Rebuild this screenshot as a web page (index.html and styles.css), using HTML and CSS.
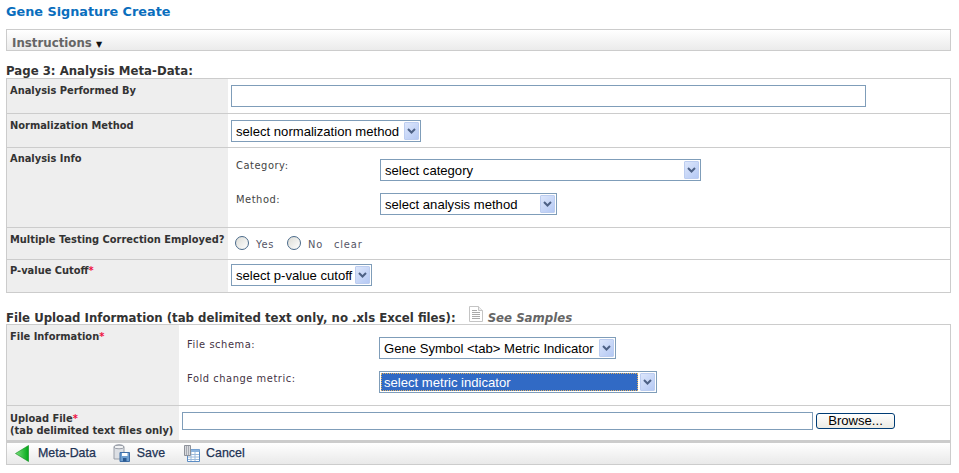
FILE: index.html
```html
<!DOCTYPE html>
<html>
  <head>
    <title>Gene Signature Create</title>
    <link rel="stylesheet" href="styles.css">
  </head>
  <body>
    <h1 class="page-title">Gene Signature Create</h1>
    <div class="instructions">Instructions <span class="caret">&#9660;</span></div>

    <h2 class="section-title first">Page 3: Analysis Meta-Data:</h2>
    <div class="form-box">
      <div class="row row-by">
        <div class="label wide">Analysis Performed By</div>
        <div class="value"><input class="text-input by-input" type="text"></div>
      </div>
      <div class="row row-norm">
        <div class="label wide">Normalization Method</div>
        <div class="value">
          <div class="select w-norm"><span class="select-text">select normalization method</span><span class="arrow"><svg width="9" height="6" viewBox="0 0 9 6"><path d="M1 1l3.5 3.5L8 1" fill="none" stroke="#4d6185" stroke-width="2"/></svg></span></div>
        </div>
      </div>
      <div class="row row-info">
        <div class="label wide">Analysis Info</div>
        <div class="value stack">
          <div class="field">
            <span class="field-name name-info">Category:</span>
            <div class="select w-cat"><span class="select-text">select category</span><span class="arrow"><svg width="9" height="6" viewBox="0 0 9 6"><path d="M1 1l3.5 3.5L8 1" fill="none" stroke="#4d6185" stroke-width="2"/></svg></span></div>
          </div>
          <div class="field">
            <span class="field-name name-info">Method:</span>
            <div class="select w-method"><span class="select-text">select analysis method</span><span class="arrow"><svg width="9" height="6" viewBox="0 0 9 6"><path d="M1 1l3.5 3.5L8 1" fill="none" stroke="#4d6185" stroke-width="2"/></svg></span></div>
          </div>
        </div>
      </div>
      <div class="row row-multi">
        <div class="label wide">Multiple Testing Correction Employed?</div>
        <div class="value radios">
          <input class="radio" type="radio" name="mtc"><span class="radio-text">Yes</span>
          <input class="radio radio-no" type="radio" name="mtc"><span class="radio-text">No</span>
          <span class="clear">clear</span>
        </div>
      </div>
      <div class="row row-cut">
        <div class="label wide">P-value Cutoff<span class="req">*</span></div>
        <div class="value">
          <div class="select w-cut"><span class="select-text">select p-value cutoff</span><span class="arrow"><svg width="9" height="6" viewBox="0 0 9 6"><path d="M1 1l3.5 3.5L8 1" fill="none" stroke="#4d6185" stroke-width="2"/></svg></span></div>
        </div>
      </div>
    </div>

    <h2 class="section-title second">
      <span>File Upload Information (tab delimited text only, no .xls Excel files):</span>
      <svg class="doc-icon" width="14" height="16" viewBox="0 0 14 16">
        <path d="M.5.5h9l4 4v11H.5z" fill="#fff" stroke="#c4c4c4"/>
        <path d="M9.500.5v4h4" fill="#eee" stroke="#c4c4c4"/>
        <path d="M3 4.500h5M3 6.500h8M3 8.500h8M3 10.500h8M3 12.500h8" stroke="#aaa"/>
      </svg>
      <span class="samples">See Samples</span>
    </h2>
    <div class="form-box">
      <div class="row row-file">
        <div class="label narrow">File Information<span class="req">*</span></div>
        <div class="value stack stack-file">
          <div class="field">
            <span class="field-name name-file">File schema:</span>
            <div class="select w-schema"><span class="select-text">Gene Symbol &lt;tab&gt; Metric Indicator</span><span class="arrow"><svg width="9" height="6" viewBox="0 0 9 6"><path d="M1 1l3.5 3.5L8 1" fill="none" stroke="#4d6185" stroke-width="2"/></svg></span></div>
          </div>
          <div class="field">
            <span class="field-name name-file">Fold change metric:</span>
            <div class="select w-metric focused"><span class="select-text">select metric indicator</span><span class="arrow"><svg width="9" height="6" viewBox="0 0 9 6"><path d="M1 1l3.5 3.5L8 1" fill="none" stroke="#4d6185" stroke-width="2"/></svg></span></div>
          </div>
        </div>
      </div>
      <div class="row row-upload">
        <div class="label narrow">Upload File<span class="req">*</span><br>(tab delimited text files only)</div>
        <div class="value upload">
          <input class="text-input file-input" type="text">
          <button class="browse" type="button">Browse...</button>
        </div>
      </div>
      <div class="toolbar">
        <span class="tool tool-back">
          <svg width="14" height="17" viewBox="0 0 14 17">
            <defs><linearGradient id="green" x1="0" y1="0" x2="1" y2="0"><stop offset="0" stop-color="#7ee07e"/><stop offset="1" stop-color="#00a818"/></linearGradient></defs>
            <path d="M13.500.5v16L.5 8.500z" fill="url(#green)" stroke="#0a8a1a" stroke-width=".6"/>
          </svg>
          Meta-Data
        </span>
        <span class="tool tool-save">
          <svg width="17" height="18" viewBox="0 0 17 18">
            <path d="M1 3c0-3 10-3 10 0v12H1z" fill="#dcdfe4" stroke="#9a9fa8"/>
            <ellipse cx="6" cy="3" rx="5" ry="1.800" fill="#f2f3f5" stroke="#9a9fa8"/>
            <path d="M7 8.500h9.500v9H7z" fill="#6f9fd0" stroke="#3f6ea6"/>
            <path d="M9 9h5.500v3H9z" fill="#fff"/>
            <path d="M10 14h3.500v3.500H10z" fill="#2c5a90"/>
          </svg>
          Save
        </span>
        <span class="tool tool-cancel">
          <svg width="17" height="17" viewBox="0 0 17 17">
            <path d="M4.500 4.500h12v12h-12z" fill="#fff" stroke="#5b8cc4"/>
            <path d="M4.500 4.500h12v2.500h-12z" fill="#8db4de"/>
            <path d="M5 9.500h11M5 12h11M5 14.500h11M8 7v9M12 7v9" stroke="#9dbbdc"/>
            <path d="M1.500.5h6v10h-6z" fill="#d8dade" stroke="#8d9199"/>
            <path d="M3.500 1v9M5.500 1v9" stroke="#a8abb2"/>
          </svg>
          Cancel
        </span>
      </div>
    </div>
  </body>
</html>
```

FILE: styles.css
```css
body {
  margin: 0;
  padding: 0 8px 0 6px;
  background-color: #ffffff;
  font-family: "DejaVu Sans", Verdana, sans-serif;
  font-size: 9.9px;
  color: #333333;
}

.page-title {
  margin: 0;
  padding-top: 5px;
  height: 29px;
  box-sizing: border-box;
  font-size: 12.8px;
  line-height: 14px;
  font-weight: bold;
  color: #0a6ebd;
}

.instructions {
  height: 22px;
  box-sizing: border-box;
  border: 1px solid #cccccc;
  padding: 6px 0 0 5px;
  background: linear-gradient(#ffffff, #ebebeb);
  font-size: 11.8px;
  line-height: 15px;
  font-weight: bold;
  color: #666666;
}

.caret {
  font-size: 8px;
  color: #111111;
}

.section-title {
  margin: 0;
  font-size: 11.75px;
  line-height: 14px;
  font-weight: bold;
  color: #333333;
}

.section-title.first {
  padding-top: 13px;
  height: 27px;
  box-sizing: border-box;
}

.section-title.second {
  display: flex;
  align-items: flex-end;
  height: 31px;
  box-sizing: border-box;
  line-height: 12px;
}

.doc-icon {
  flex: none;
  margin: 0 5px 2px 13px;
}

.samples {
  font-style: italic;
  color: #666666;
}

.form-box {
  border: 1px solid #cccccc;
  width: 945px;
  box-sizing: border-box;
}

.row {
  display: flex;
  box-sizing: border-box;
  border-bottom: 1px solid #cccccc;
}

.row:last-of-type {
  border-bottom: none;
}

.label {
  flex: none;
  box-sizing: border-box;
  padding: 6px 0 0 3px;
  background-color: #eeeeee;
  font-weight: bold;
  line-height: 12px;
}

.label.wide {
  width: 221px;
}

.label.narrow {
  width: 172px;
}

.value {
  flex: 1;
  padding-left: 3px;
}

.row-by { height: 35px; }
.row-norm { height: 34px; }
.row-info { height: 80px; }
.row-multi { height: 32px; }
.row-cut { height: 32px; }
.row-file { height: 81px; }
.row-upload { height: 35px; }

.row-by .value,
.row-norm .value {
  padding-top: 6px;
}

.row-cut .value {
  padding-top: 4px;
}

.row-cut .label,
.row-info .label {
  padding-top: 5px;
}

.text-input {
  display: block;
  box-sizing: border-box;
  margin: 0;
  padding: 0;
  border: 1px solid #7f9db9;
  background-color: #ffffff;
}

.by-input {
  width: 635px;
  height: 22px;
}

.select {
  display: flex;
  box-sizing: border-box;
  height: 22px;
  border: 1px solid #7f9db9;
  padding: 1px;
  background-color: #ffffff;
  font-family: "Liberation Sans", Arial, sans-serif;
  font-size: 13.1px;
  line-height: 20px;
  color: #000000;
}

.select-text {
  flex: 1;
  padding-left: 3px;
}

.arrow {
  display: flex;
  flex: none;
  align-items: center;
  justify-content: center;
  box-sizing: border-box;
  width: 15px;
  border: 1px solid #bccdf0;
  border-radius: 1px;
  background: linear-gradient(135deg, #dce6fb, #b5c9f4);
}

.w-norm { width: 190px; }
.w-cat { width: 321px; }
.w-method { width: 177px; }
.w-cut { width: 141px; }
.w-schema { width: 237px; }
.w-metric { width: 278px; }

.focused .select-text {
  margin-right: 2px;
  outline: 1px dotted #e0b060;
  outline-offset: -1px;
  background-color: #316ac5;
  color: #ffffff;
}

.stack {
  display: flex;
  flex-direction: column;
  gap: 12px;
  padding-top: 11px;
}

.stack-file {
  padding-top: 12px;
}

.field {
  display: flex;
}

.field-name {
  box-sizing: border-box;
  letter-spacing: 0.55px;
  line-height: 13px;
  color: #444444;
}

.name-info {
  width: 149px;
  padding-left: 5px;
}

.name-file {
  width: 197px;
  padding-left: 5px;
  line-height: 15px;
  color: #443344;
}

.radios {
  display: flex;
  align-items: center;
  padding: 1px 0 0 7px;
}

.radio {
  appearance: none;
  box-sizing: border-box;
  flex: none;
  width: 14px;
  height: 14px;
  margin: 0 7px 2px 0;
  border: 1px solid #4a6a8a;
  border-radius: 50%;
  background: linear-gradient(135deg, #dcdcd6, #ffffff);
}

.radio-no {
  margin-left: 13px;
}

.radio-text,
.clear {
  letter-spacing: 0.7px;
  color: #555566;
}

.clear {
  margin-left: 11px;
  letter-spacing: 0.9px;
}

.upload {
  display: flex;
  align-items: flex-start;
  padding: 6px 0 0 3px;
}

.row-upload .label {
  padding-top: 7px;
}

.file-input {
  width: 631px;
  height: 18px;
}

.browse {
  box-sizing: border-box;
  width: 79px;
  height: 16px;
  margin: 1px 0 0 3px;
  padding: 0;
  border: 1px solid #003c74;
  border-radius: 3px;
  background: linear-gradient(#ffffff, #ecebe4);
  font-family: "Liberation Sans", Arial, sans-serif;
  font-size: 13.1px;
  line-height: 14px;
  color: #000000;
}

.toolbar {
  display: flex;
  align-items: center;
  height: 23px;
  box-sizing: border-box;
  border-top: 2px solid #cccccc;
  padding: 0 0 1px 8px;
  background: linear-gradient(#ffffff, #e9e9e9);
  font-family: "Liberation Sans", Arial, sans-serif;
  font-size: 12.4px;
  color: #223355;
}

.tool {
  display: flex;
  align-items: center;
  gap: 8px;
  -webkit-text-stroke: 0.25px #223355;
}

.tool-back {
  gap: 9px;
}

.tool-save {
  margin-left: 17px;
  gap: 7px;
}

.tool-cancel {
  margin-left: 18px;
  gap: 6px;
}

.req {
  color: #ee1144;
}
```
